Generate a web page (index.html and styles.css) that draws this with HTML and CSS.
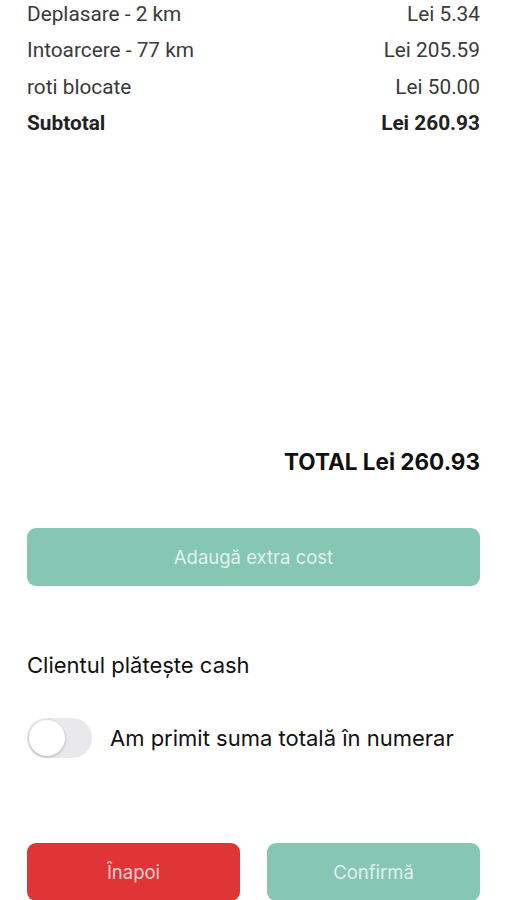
FILE: index.html
```html
<!DOCTYPE html>
<html lang="ro">
<head>
    <meta charset="UTF-8">
    <meta name="viewport" content="width=device-width, initial-scale=1.0">
    <title>Plata</title>
    <link rel="stylesheet" href="styles.css">
</head>
<body>

    <div class="page">
        <div class="costs">
            <div class="row"><span>Deplasare - 2 km</span><span>Lei 5.34</span></div>
            <div class="row"><span>Intoarcere - 77 km</span><span>Lei 205.59</span></div>
            <div class="row"><span>roti blocate</span><span>Lei 50.00</span></div>
            <div class="row subtotal"><span>Subtotal</span><span>Lei 260.93</span></div>
        </div>

        <div class="total">TOTAL Lei 260.93</div>

        <button class="btn btn-green btn-wide" type="button">Adaugă extra cost</button>

        <div class="cash-title">Clientul plătește cash</div>

        <label class="switch-row">
            <span class="switch"><span class="knob"></span></span>
            <span class="switch-label">Am primit suma totală în numerar</span>
        </label>

        <div class="actions">
            <button class="btn btn-red" type="button">Înapoi</button>
            <button class="btn btn-green" type="button">Confirmă</button>
        </div>
    </div>

</body>
</html>
```

FILE: styles.css
```css
/* General styling */
body {
    margin: 0;
    padding: 0;
    background-color: #fff;
    font-family: Inter, "Noto Sans", sans-serif;
    color: #111;
}

.page {
    padding: 0 27px;
}

.costs {
    margin-top: -4px;
    font-family: Roboto, "Noto Sans", sans-serif;
    font-size: 20.8px;
    color: #3a3a3a;
}

.row {
    display: flex;
    justify-content: space-between;
    line-height: 36.4px;
}

.subtotal {
    font-weight: bold;
    color: #222;
}

.total {
    margin-top: 308px;
    text-align: right;
    font-size: 22.5px;
    font-weight: bold;
    line-height: 24px;
    color: #111;
}

.btn {
    border: none;
    border-radius: 9px;
    font-family: Inter, "Noto Sans", sans-serif;
    font-size: 18.5px;
    color: rgba(255, 255, 255, 0.78);
    cursor: pointer;
}

.btn-green {
    background-color: #85c7b3;
}

.btn-red {
    background-color: #e03537;
}

.btn-wide {
    display: block;
    width: 100%;
    height: 58px;
    margin-top: 54px;
}

.cash-title {
    margin-top: 66px;
    font-size: 22px;
    line-height: 26px;
    color: #111;
}

.switch-row {
    display: flex;
    align-items: center;
    gap: 18px;
    margin-top: 40px;
}

.switch {
    position: relative;
    width: 65px;
    height: 40px;
    border-radius: 20px;
    background-color: #e9e9eb;
    flex-shrink: 0;
}

.knob {
    position: absolute;
    top: 2px;
    left: 2px;
    width: 36px;
    height: 36px;
    border-radius: 50%;
    background-color: #fff;
    box-shadow: 0 1px 3px rgba(0, 0, 0, 0.25);
}

.switch-label {
    font-size: 22px;
    color: #111;
}

.actions {
    display: flex;
    gap: 27px;
    margin-top: 85px;
}

.actions .btn {
    flex: 1;
    height: 58px;
}
```
